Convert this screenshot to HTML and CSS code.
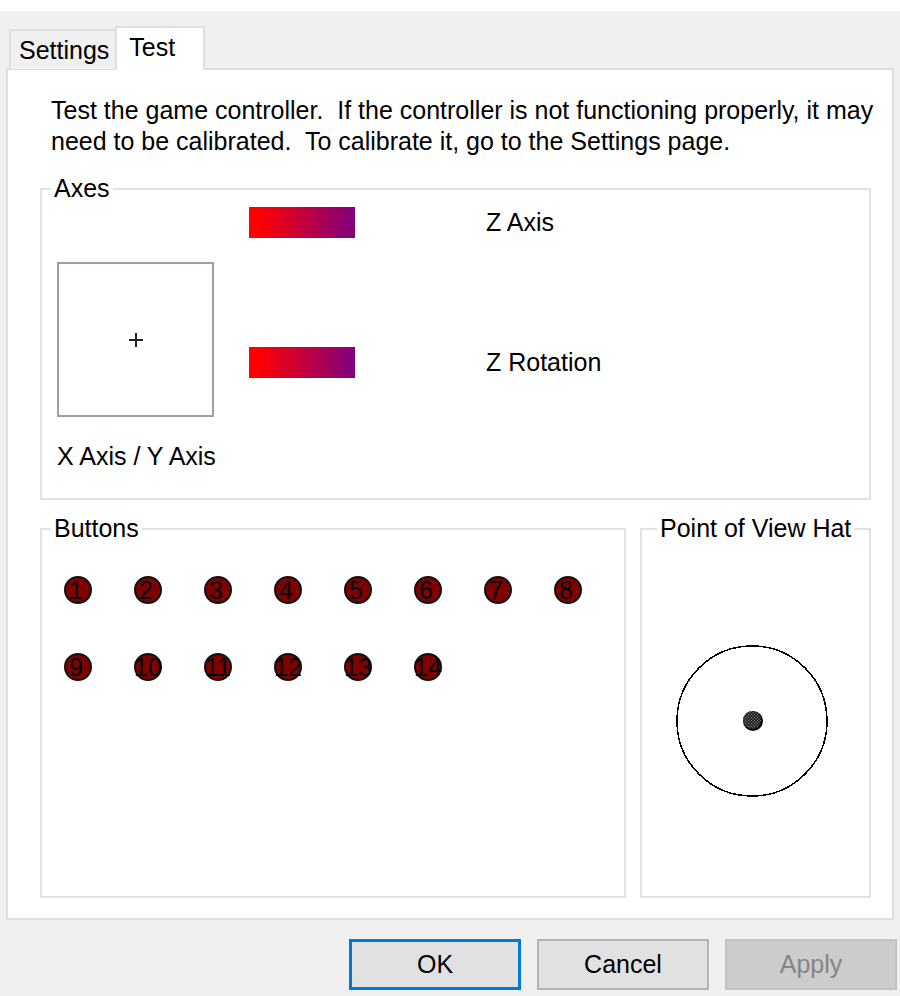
FILE: index.html
```html
<!DOCTYPE html>
<html lang="en">
<head>
<meta charset="utf-8">
<title>Game controller</title>
<link rel="stylesheet" href="styles.css">
</head>
<body>
<main class="dialog">
  <div class="tabs" role="tablist">
    <button class="tab" type="button" role="tab" aria-selected="false">Settings</button>
    <button class="tab tab-active" type="button" role="tab" aria-selected="true" aria-controls="test">Test</button>
  </div>
  <section class="panel" id="test" role="tabpanel">
    <p class="intro">Test the game controller.&nbsp; If the controller is not functioning properly, it may need to be calibrated.&nbsp; To calibrate it, go to the Settings page.</p>
    <fieldset class="group axes">
      <legend>Axes</legend>
      <div class="stick">
        <div class="stick-box">
          <svg class="cross" viewBox="0 0 15 15" shape-rendering="crispEdges" aria-hidden="true"><path d="M8 1v14M1 8h14"/></svg>
        </div>
        <span>X Axis / Y Axis</span>
      </div>
      <div class="bars">
        <span class="bar"></span><span>Z Axis</span>
        <span class="bar"></span><span>Z Rotation</span>
      </div>
    </fieldset>
    <div class="row">
      <fieldset class="group buttons">
        <legend>Buttons</legend>
        <ol class="lights">
          <li class="light single">1</li>
          <li class="light single">2</li>
          <li class="light single">3</li>
          <li class="light single">4</li>
          <li class="light single">5</li>
          <li class="light single">6</li>
          <li class="light single">7</li>
          <li class="light single">8</li>
          <li class="light single">9</li>
          <li class="light">10</li>
          <li class="light">11</li>
          <li class="light">12</li>
          <li class="light">13</li>
          <li class="light">14</li>
        </ol>
      </fieldset>
      <fieldset class="group pov">
        <legend>Point of View Hat</legend>
        <svg class="hat" viewBox="0 0 152 152" aria-hidden="true">
          <defs>
            <pattern id="dither" width="3" height="3" patternUnits="userSpaceOnUse">
              <rect width="3" height="3" fill="#1c1c1c"/>
              <rect width="1" height="1" fill="#8c8c8c"/>
              <rect x="1" y="1" width="2" height="2" fill="#444"/>
            </pattern>
          </defs>
          <circle class="hat-ring" cx="76" cy="76" r="75" shape-rendering="crispEdges"/>
          <circle cx="77" cy="76" r="10" fill="#000"/>
          <circle cx="76" cy="75" r="9" fill="url(#dither)"/>
        </svg>
      </fieldset>
    </div>
  </section>
  <div class="actions">
    <button class="action action-default" type="button">OK</button>
    <button class="action" type="button">Cancel</button>
    <button class="action" type="button" disabled>Apply</button>
  </div>
</main>
</body>
</html>
```
FILE: styles.css
```css
* {
  box-sizing: border-box;
}

body {
  margin: 0;
  padding-top: 11px;
  background: #fff;
  color: #000;
  font: 25px/31px "Liberation Sans", Arial, sans-serif;
}

button {
  font: inherit;
  color: inherit;
}

.dialog {
  min-height: calc(100vh - 11px);
  padding: 15px 6px 6px;
  background: #f0f0f0;
}

.tabs {
  display: flex;
  align-items: flex-end;
  padding-left: 3px;
}

.tab {
  height: 40px;
  padding: 0 6px 0 8px;
  border: 2px solid #dedede;
  border-width: 2px 0 0 2px;
  background: #f0f0f0;
}

.tab-active {
  z-index: 1;
  height: 44px;
  margin-bottom: -1px;
  padding: 0 28px 4px 12px;
  border-right-width: 2px;
  background: #fff;
}

.panel {
  margin-top: -1px;
  padding: 25px 21px 20px 32px;
  border: 2px solid #dedede;
  background: #fff;
}

.intro {
  margin: 0 -16px 16px 0;
  padding-left: 11px;
}

.group {
  min-width: 0;
  margin: 0;
  padding: 0;
  border: 2px solid #e2e2e2;
}

.group legend {
  margin-left: 9px;
  padding: 0 3px;
}

.axes {
  display: flex;
  height: 327px;
}

.stick {
  width: 207px;
  padding: 58px 0 0 15px;
}

.stick-box {
  display: grid;
  place-items: center;
  width: 157px;
  height: 155px;
  margin-bottom: 24px;
  border: 2px solid #9a9fa8;
}

.cross {
  width: 15px;
  height: 15px;
  fill: none;
  stroke: #222;
  stroke-width: 2;
}

.bars {
  display: grid;
  flex: 1;
  grid-template-columns: 106px 1fr;
  grid-auto-rows: 31px;
  gap: 109px 131px;
  align-content: start;
  padding-top: 3px;
}

.bar {
  background: linear-gradient(to right, #f00 8%, #800080);
}

.row {
  display: flex;
  gap: 14px;
  margin-top: 13px;
}

.buttons {
  flex: 1;
  height: 385px;
}

.lights {
  display: grid;
  grid-template-columns: repeat(8, 28px);
  gap: 49px 42px;
  margin: 0;
  padding: 32px 0 0 22px;
  list-style: none;
}

.light {
  display: flex;
  align-items: center;
  justify-content: center;
  height: 28px;
  border: 2px solid #111;
  border-radius: 50%;
  background: #800000;
}

.single {
  padding-right: 4px;
}

.pov {
  width: 231px;
}

.pov legend {
  margin-left: 15px;
}

.hat {
  display: block;
  width: 152px;
  height: 152px;
  margin: 101px auto 0 34px;
}

.hat-ring {
  fill: none;
  stroke: #000;
  stroke-width: 1.5;
}

.actions {
  display: flex;
  justify-content: flex-end;
  gap: 16px;
  margin: 19px -3px 0 0;
}

.action {
  width: 172px;
  height: 51px;
  padding: 0;
  border: 2px solid #b4b4b4;
  background: #e1e1e1;
}

.action-default {
  border: 3px solid #0078d7;
}

.action:disabled {
  border-color: #c2c2c2;
  background: #ccc;
  color: #858585;
}
```
